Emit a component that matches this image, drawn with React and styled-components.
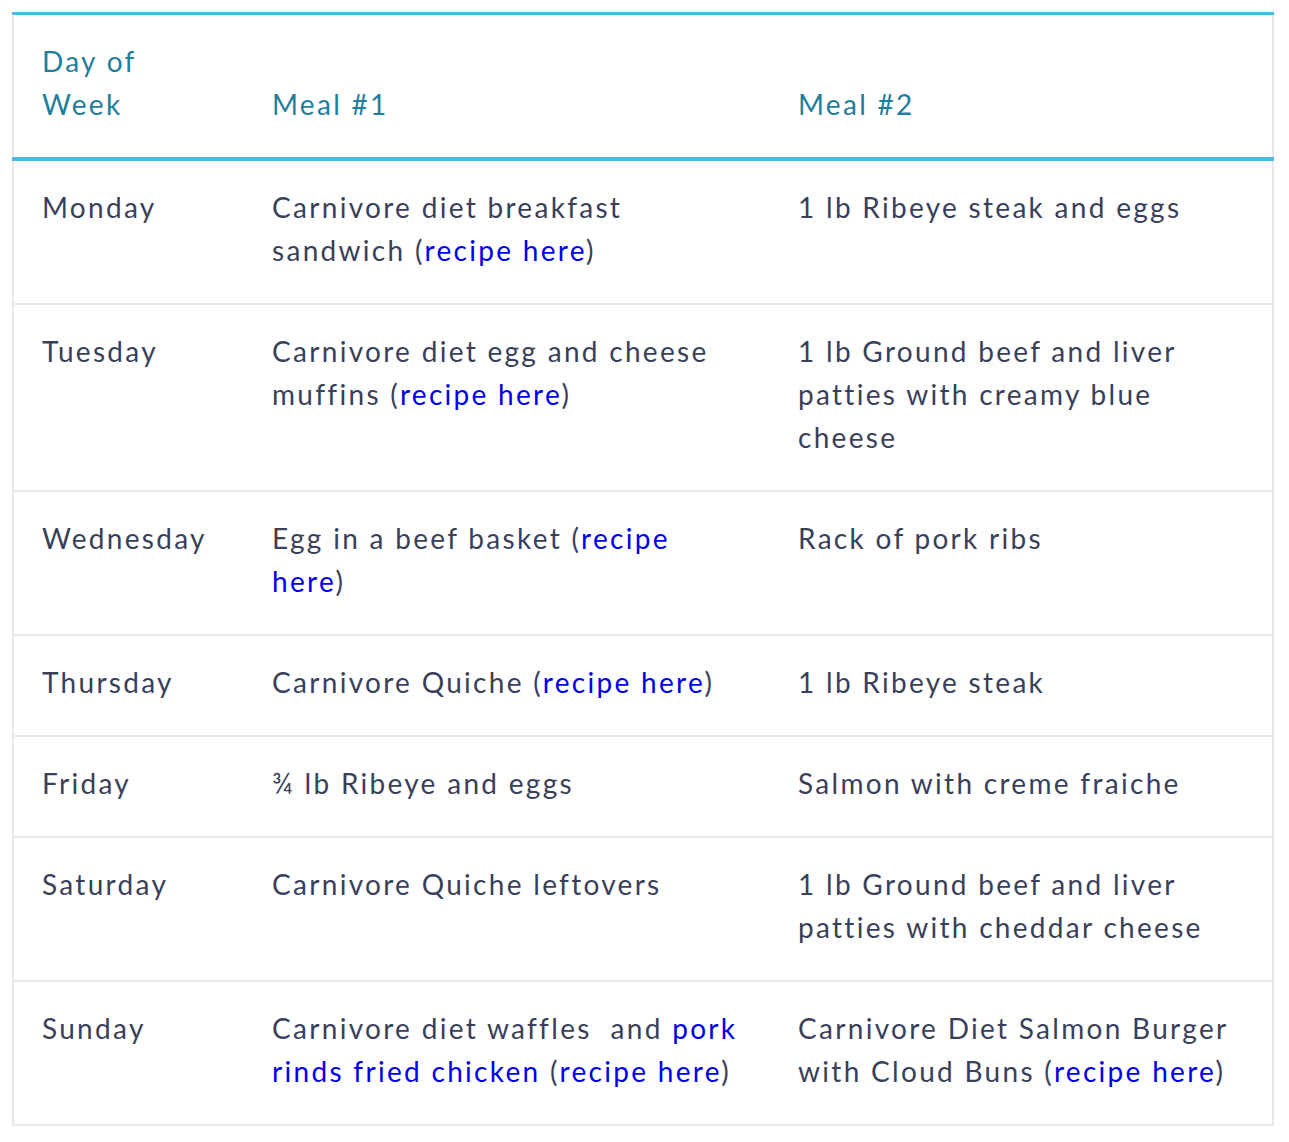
import React from 'react';
import styled, { createGlobalStyle } from 'styled-components';

const GlobalStyle = createGlobalStyle`
  body {
    margin: 0;
    background: #ffffff;
  }
`;

const Page = styled.div`
  padding: 12px 15px 0 12px;
`;

const Table = styled.table`
  width: 1262px;
  border-collapse: collapse;
  table-layout: fixed;
  font-family: Lato, "Noto Sans", sans-serif;
  font-size: 28px;
  letter-spacing: 2.3px;
  line-height: 43px;
  color: #3a3f5a;
  border-top: 3px solid #4db8e6;
  border-left: 2px solid #e8e8e8;
  border-right: 2px solid #e8e8e8;
`;

const Head = styled.thead`
  border-bottom: 4px solid #4db8e6;
`;

const HeadCell = styled.th`
  text-align: left;
  font-weight: 400;
  vertical-align: bottom;
  color: #1f7e9c;
  padding: 25px 25px 31px 28px;
`;

const Row = styled.tr`
  border-bottom: 2px solid #e8e8e8;
`;

const Cell = styled.td`
  vertical-align: top;
  padding: 25px 25px 31px 28px;
`;

const Link = styled.a`
  color: #0000ee;
  text-decoration: none;
`;

const Recipe = () => (
  <>
    (<Link href="#">recipe here</Link>)
  </>
);

const rows = [
  {
    day: 'Monday',
    meal1: <>Carnivore diet breakfast sandwich <Recipe /></>,
    meal2: '1 lb Ribeye steak and eggs',
  },
  {
    day: 'Tuesday',
    meal1: <>Carnivore diet egg and cheese muffins <Recipe /></>,
    meal2: '1 lb Ground beef and liver patties with creamy blue cheese',
  },
  {
    day: 'Wednesday',
    meal1: <>Egg in a beef basket <Recipe /></>,
    meal2: 'Rack of pork ribs',
  },
  {
    day: 'Thursday',
    meal1: <>Carnivore Quiche <Recipe /></>,
    meal2: '1 lb Ribeye steak',
  },
  {
    day: 'Friday',
    meal1: '¾ lb Ribeye and eggs',
    meal2: 'Salmon with creme fraiche',
  },
  {
    day: 'Saturday',
    meal1: 'Carnivore Quiche leftovers',
    meal2: '1 lb Ground beef and liver patties with cheddar cheese',
  },
  {
    day: 'Sunday',
    meal1: (
      <>
        Carnivore diet waffles&nbsp; and <Link href="#">pork rinds fried chicken</Link> <Recipe />
      </>
    ),
    meal2: <>Carnivore Diet Salmon Burger with Cloud Buns <Recipe /></>,
  },
];

const App = () => {
  return (
    <Page>
      <GlobalStyle />
      <Table>
        <colgroup>
          <col style={{ width: 231 }} />
          <col style={{ width: 526 }} />
          <col />
        </colgroup>
        <Head>
          <tr>
            <HeadCell>Day of Week</HeadCell>
            <HeadCell>Meal #1</HeadCell>
            <HeadCell>Meal #2</HeadCell>
          </tr>
        </Head>
        <tbody>
          {rows.map((row) => (
            <Row key={row.day}>
              <Cell>{row.day}</Cell>
              <Cell>{row.meal1}</Cell>
              <Cell>{row.meal2}</Cell>
            </Row>
          ))}
        </tbody>
      </Table>
    </Page>
  );
};

export default App;
